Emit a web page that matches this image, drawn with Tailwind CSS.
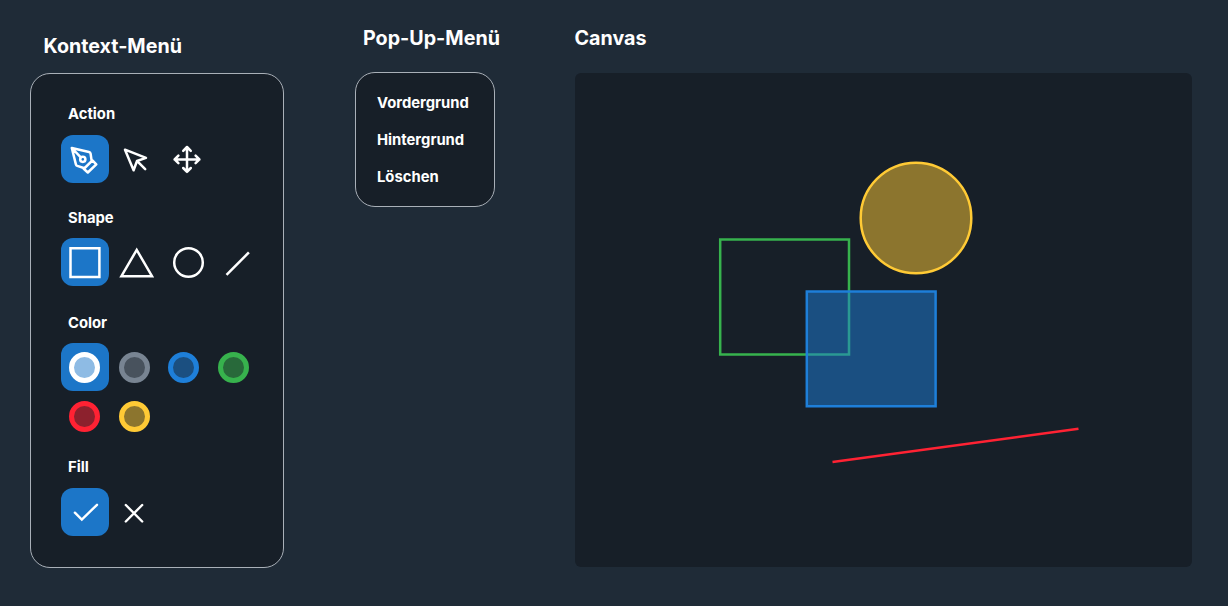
<!DOCTYPE html>
<html lang="de">
<head>
<meta charset="utf-8">
<title>Canvas</title>
<script src="https://cdn.jsdelivr.net/npm/@tailwindcss/browser@4"></script>
</head>
<body class="h-[606px] w-[1228px] overflow-hidden bg-[#1f2b37] font-['Inter',sans-serif] font-bold text-white">
<div class="flex h-[606px] items-start">
  <section class="ml-[30px] w-[254px] shrink-0 pt-[31px]">
    <h2 class="pl-[13.5px] text-[19.7px] leading-[30px]">Kontext-Menü</h2>
    <div class="mt-[11.5px] h-[495.5px] rounded-[20px] border border-[#a9b0b8] bg-[#171f28] pl-[29.5px]">
      <div class="h-[134.5px] pt-[30px]">
        <h3 class="pl-[7.5px] text-[14.8px] leading-[20px]">Action</h3>
        <div class="mt-[11.5px] flex">
          <button class="size-12 rounded-xl bg-[#1c76c8]"><svg class="size-12" viewBox="0 0 48 48" fill="none" stroke="#fff" stroke-width="2.5" stroke-linejoin="round" stroke-linecap="round"><path d="M10.8 13 28 17Q29.4 17.4 29.6 18.6L30.7 26.2 23.5 33.3 16.3 30.9Q15.2 30.5 14.9 29.4ZM10.8 13 19.8 22.3M31.4 25.4 35.3 29.3 26.8 37.5 22.7 33.8Z"/><circle cx="21.8" cy="24.3" r="2.6"/></svg></button>
          <button class="size-12"><svg class="size-12" viewBox="0 0 48 48" fill="none" stroke="#fff" stroke-width="2.5" stroke-linejoin="round" stroke-linecap="round"><path d="M16 14.7 37 22.9 28 26 24.6 35.3ZM28.7 26.6 36.2 34.2"/></svg></button>
          <button class="ml-[6px] size-12"><svg class="size-12" viewBox="0 0 48 48" fill="none" stroke="#fff" stroke-width="2.5" stroke-linejoin="round" stroke-linecap="round"><path d="M24 12V36.8M11.6 24.4H36.4M20.2 15.8 24 12 27.8 15.8M20.2 33 24 36.8 27.8 33M15.4 20.6 11.6 24.4 15.4 28.2M32.6 20.6 36.4 24.4 32.6 28.2"/></svg></button>
        </div>
      </div>
      <div class="h-[105px]">
        <h3 class="pl-[7.5px] text-[14.8px] leading-[20px]">Shape</h3>
        <div class="mt-[10px] flex">
          <button class="size-12 rounded-xl bg-[#1c76c8]"><svg class="size-12" viewBox="0 0 48 48" fill="none" stroke="#fff" stroke-width="2.5"><path d="M9.5 10.2H38.4V39.1H9.5Z"/></svg></button>
          <button class="ml-[4px] size-12"><svg class="size-12" viewBox="0 0 48 48" fill="none" stroke="#fff" stroke-width="2.5"><path d="M23.7 11.9 39 38.2H8.4Z"/></svg></button>
          <button class="ml-[4px] size-12"><svg class="size-12" viewBox="0 0 48 48" fill="none" stroke="#fff" stroke-width="2.5"><circle cx="23.5" cy="24.5" r="14.3"/></svg></button>
          <button class="size-12"><svg class="size-12" viewBox="0 0 48 48" fill="none" stroke="#fff" stroke-width="2.5"><path d="M13.5 36.9 35.9 14.4"/></svg></button>
        </div>
      </div>
      <div class="h-[144px]">
        <h3 class="pl-[7.5px] text-[14.8px] leading-[20px]">Color</h3>
        <div class="mt-[10px] grid grid-cols-[repeat(4,49.5px)] auto-rows-[49.5px]">
          <button class="flex size-12 items-center justify-center rounded-xl bg-[#1c76c8]"><span class="size-[31px] rounded-full border-5 border-white bg-[#8ebbe4]"></span></button>
          <button class="flex size-12 items-center justify-center"><span class="size-[31px] rounded-full border-5 border-[#788492] bg-[#48525d]"></span></button>
          <button class="flex size-12 items-center justify-center"><span class="size-[31px] rounded-full border-5 border-[#1e7fd9] bg-[#1b4f80]"></span></button>
          <button class="flex size-12 items-center justify-center"><span class="size-[31px] rounded-full border-5 border-[#37b24d] bg-[#28693a]"></span></button>
          <button class="flex size-12 items-center justify-center"><span class="size-[31px] rounded-full border-5 border-[#ff2233] bg-[#8c212d]"></span></button>
          <button class="flex size-12 items-center justify-center"><span class="size-[31px] rounded-full border-5 border-[#ffca35] bg-[#8c752e]"></span></button>
        </div>
      </div>
      <div>
        <h3 class="pl-[7.5px] text-[14.8px] leading-[20px]">Fill</h3>
        <div class="mt-[11px] flex">
          <button class="size-12 rounded-xl bg-[#1c76c8]"><svg class="size-12" viewBox="0 0 48 48" fill="none" stroke="#fff" stroke-width="2.4" stroke-linecap="round"><path d="M13.9 24.7 20.8 31.5 36 16.8"/></svg></button>
          <button class="ml-px size-12"><svg class="size-12" viewBox="0 0 48 48" fill="none" stroke="#fff" stroke-width="2.4" stroke-linecap="round"><path d="M15.8 17 32.2 33.5M32.2 17 15.8 33.5"/></svg></button>
        </div>
      </div>
    </div>
  </section>
  <section class="ml-[71px] w-[148px] shrink-0 pt-[23px]">
    <h2 class="whitespace-nowrap pl-[8px] text-[19.7px] leading-[30px]">Pop-Up-Menü</h2>
    <ul class="mt-[18.5px] flex h-[135.5px] w-[140px] flex-col gap-[17px] rounded-[20px] border border-[#a9b0b8] bg-[#171f28] pt-[20px] pl-[21px] text-[14.8px] leading-[20px]">
      <li>Vordergrund</li>
      <li>Hintergrund</li>
      <li>Löschen</li>
    </ul>
  </section>
  <section class="ml-[71px] w-[618px] shrink-0 pt-[23px]">
    <h2 class="pl-[0.5px] text-[19.7px] leading-[30px]">Canvas</h2>
    <svg class="mt-[20px] ml-px block h-[494px] w-[617px] rounded-md bg-[#171f28]" viewBox="575 73 617 494" fill="none" stroke-width="2.5">
      <circle cx="916" cy="218" r="55.3" fill="#8c752e" stroke="#ffca35"/>
      <path d="M720.2 239.5H849V354.4H720.2Z" stroke="#37b24d"/>
      <path d="M806.8 291.5H935.6V406.3H806.8Z" fill="#1e7fd9" fill-opacity=".5" stroke="#1e7fd9"/>
      <path d="M832.5 462 1078.5 428.8" stroke="#ff2233"/>
    </svg>
  </section>
</div>
</body>
</html>
